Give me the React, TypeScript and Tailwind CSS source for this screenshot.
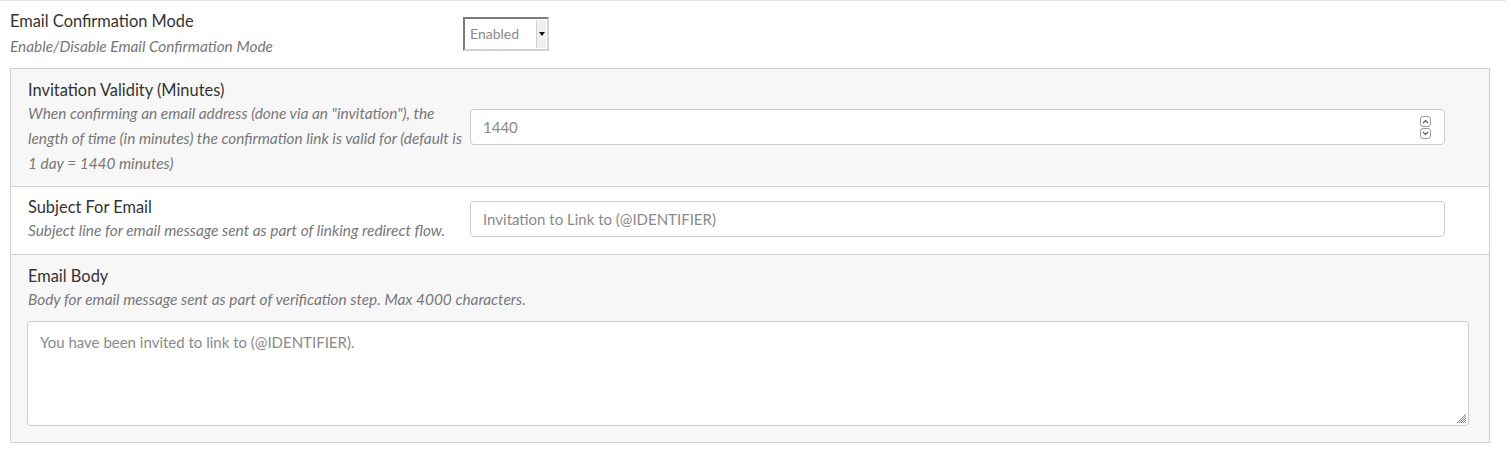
import React from "react";

const font = { fontFamily: "Lato, 'Noto Sans', sans-serif" };

function Spinner() {
  return (
    <div className="flex flex-col gap-[1px] mr-[13px]">
      <div className="w-[11px] h-[11px] rounded-[3px] border border-[#9a9a9a] flex items-center justify-center">
        <svg width="7" height="5" viewBox="0 0 7 5">
          <path d="M1 4 L3.5 1.5 L6 4" fill="none" stroke="#555" strokeWidth="1.2" />
        </svg>
      </div>
      <div className="w-[11px] h-[11px] rounded-[3px] border border-[#9a9a9a] flex items-center justify-center">
        <svg width="7" height="5" viewBox="0 0 7 5">
          <path d="M1 1 L3.5 3.5 L6 1" fill="none" stroke="#555" strokeWidth="1.2" />
        </svg>
      </div>
    </div>
  );
}

function Grip() {
  return (
    <svg className="absolute right-[1px] bottom-[1px]" width="11" height="11" viewBox="0 0 11 11">
      <path d="M10 1 L1 10 M10 3 L3 10 M10 5 L5 10 M10 7 L7 10 M10 9 L9 10" stroke="#888" strokeWidth="1" />
    </svg>
  );
}

export default function App() {
  return (
    <div className="w-[1506px] bg-white border-t border-[#e3e6ea] text-[#333]" style={font}>
      <div className="flex items-start px-[10px] pt-[8px] h-[67px]">
        <div className="w-[453px]">
          <div className="text-[16.4px] leading-[23px]">Email Confirmation Mode</div>
          <div className="text-[15.4px] leading-[25px] italic text-[#777] mt-[2px]">
            Enable/Disable Email Confirmation Mode
          </div>
        </div>
        <div className="mt-[8px] w-[86px] h-[34px] flex border-2 border-t-[#7a7a7a] border-l-[#7a7a7a] border-r-[#d4d4d4] border-b-[#d4d4d4] bg-white">
          <div className="flex-1 flex items-center pl-[5px] pb-[2px] text-[14px] text-[#8a8a8a]">Enabled</div>
          <div className="w-[10px] my-[1px] mr-[1px] bg-[#efefef] border-l border-[#d0d0d0] flex items-center justify-center">
            <svg width="6" height="4" viewBox="0 0 6 4">
              <path d="M0 0 L6 0 L3 4 Z" fill="#111" />
            </svg>
          </div>
        </div>
      </div>

      <div className="mx-[10px] w-[1480px] border border-[#cfcfcf]">
        <div className="flex items-start bg-[#f7f7f7] pl-[17px] pr-[44px] pt-[9px] pb-[10px] border-b border-[#d4d4d4]">
          <div className="w-[442px] shrink-0">
            <div className="text-[16.4px] leading-[23px]">Invitation Validity (Minutes)</div>
            <div className="text-[15.4px] leading-[25px] italic text-[#777]">
              When confirming an email address (done via an "invitation"), the length of time (in minutes) the
              confirmation link is valid for (default is 1 day = 1440 minutes)
            </div>
          </div>
          <div className="flex-1 mt-[31px] h-[36px] bg-white border border-[#ccc] rounded-[4px] flex items-center justify-between pl-[12px]">
            <span className="text-[15px] text-[#8a8a8a]">1440</span>
            <Spinner />
          </div>
        </div>

        <div className="flex items-start bg-white pl-[17px] pr-[44px] pt-[8px] pb-[11px] border-b border-[#d4d4d4]">
          <div className="w-[442px] shrink-0">
            <div className="text-[16.4px] leading-[23px]">Subject For Email</div>
            <div className="text-[15.4px] leading-[25px] italic text-[#777] whitespace-nowrap">
              Subject line for email message sent as part of linking redirect flow.
            </div>
          </div>
          <div className="flex-1 mt-[6px] h-[36px] bg-white border border-[#ccc] rounded-[4px] flex items-center pl-[12px]">
            <span className="text-[15px] text-[#8a8a8a]">Invitation to Link to (@IDENTIFIER)</span>
          </div>
        </div>

        <div className="bg-[#f7f7f7] pl-[16px] pr-[20px] pt-[9px] pb-[16px]">
          <div className="pl-[1px] text-[16.4px] leading-[23px]">Email Body</div>
          <div className="pl-[1px] text-[15.4px] leading-[25px] italic text-[#777]">
            Body for email message sent as part of verification step. Max 4000 characters.
          </div>
          <div className="relative mt-[9px] h-[105px] bg-white border border-[#ccc] rounded-[4px] px-[12px] pt-[8px]">
            <span className="text-[15px] leading-[20px] text-[#8a8a8a]">You have been invited to link to (@IDENTIFIER).</span>
            <Grip />
          </div>
        </div>
      </div>
    </div>
  );
}
